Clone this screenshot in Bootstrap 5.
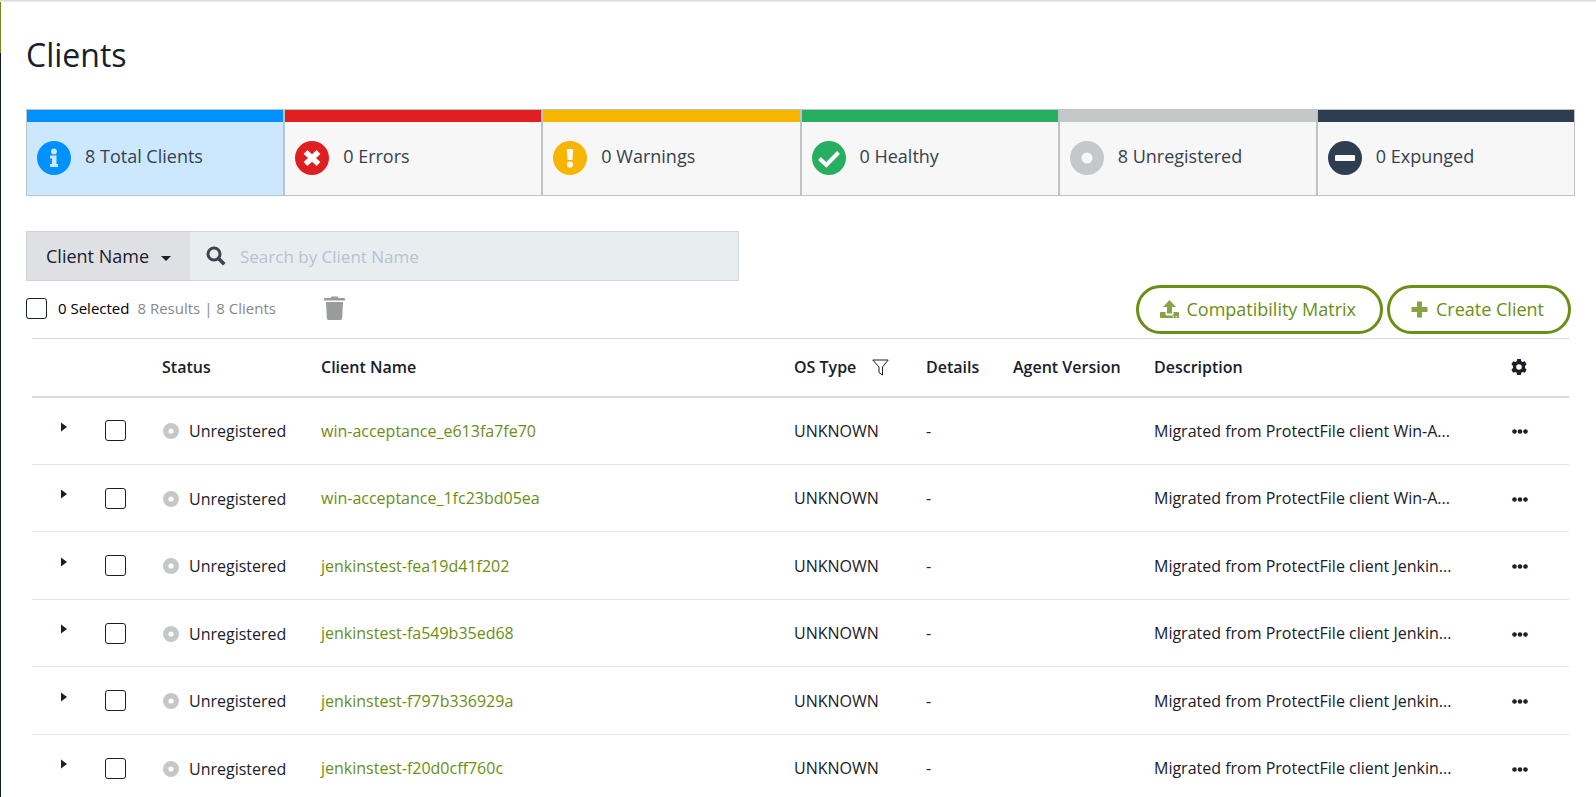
<!DOCTYPE html>
<html lang="en">
<head>
<meta charset="utf-8">
<meta name="viewport" content="width=device-width, initial-scale=1">
<title>Clients</title>
<link href="https://cdn.jsdelivr.net/npm/bootstrap@5.3.0/dist/css/bootstrap.min.css" rel="stylesheet">
<style>
  body { font-family: "Open Sans", "Noto Sans", sans-serif; font-size: 16px; line-height: 24px; color: #18202a; background: #fff; }
  svg { display: block; fill: currentColor; flex: none; }

  /* app frame: thin top bar and the edge of the side menu */
  .topline { height: 1px; background: #dcdcdc; border-bottom: 1px solid #ececec; box-sizing: content-box; }
  .side-edge { width: 1px; background: #101a26; }
  .side-edge span { display: block; height: 51px; background: #76881d; }
  .page { padding: 29px 21px 0 25px; min-width: 0; }
  h1 { font-size: 32px; line-height: 48px; font-weight: 500; margin: 0 0 30px; }

  /* status tiles */
  .tile { flex: 1 1 0; background: #f7f7f7; border: 1px solid #bdc3c7; color: #36414c; font-size: 18px; line-height: 24px; text-align: left; padding: 0; }
  .tile .bar { height: 12px; background: var(--tone); }
  .tile .inner { height: 73px; padding: 0 10px 6px; gap: 14px; }
  .tile svg { color: var(--tone); margin-top: 4px; }
  .tile.current { background: #cce8ff; }
  .t-blue { --tone: #0091ff; } .t-red { --tone: #e02020; } .t-amber { --tone: #f7b500; }
  .t-green { --tone: #27ae60; } .t-grey { --tone: #c4c8c9; } .t-navy { --tone: #2c3e50; }

  /* search */
  .search { width: 713px; max-width: 100%; margin-top: 35px; }
  .search .pick { width: 164px; height: 50px; background: #dfe0e4; border: 1px solid #cdd1d4; border-right: 0; border-radius: 0; font-size: 18px; color: #18202a; padding: 0 19px; }
  .search .pick::after { margin-left: 12px; border-top-width: 5px; border-left-width: 5px; border-right-width: 5px; vertical-align: 2px; }
  .search .glass { background: #e8eef0; border: 1px solid #d3d7d9; border-right: 0; border-radius: 0; padding: 0 14px 0 16px; color: #3b444e; }
  .search .form-control { background: #e8eef0; border: 1px solid #d3d7d9; border-left: 0; border-radius: 0; font-size: 17px; padding: 2px 0 0; margin-left: 0 !important; }
  .search .form-control::placeholder { color: #b4c3d3; }

  /* toolbar */
  .tools { height: 57px; padding-right: 4px; }
  .form-check-input.box { width: 21px; height: 21px; margin: 0; border: 1px solid #18202a; border-radius: 3px; flex: none; float: none; display: block; }
  .picked { height: 57px; padding-bottom: 3px; }
  .counts { font-size: 15px; margin-left: 11px; gap: 8px; }
  .counts label { color: #000; font-weight: 500; }
  .counts span { color: #888; }
  .btn-trash { padding: 0; border: 0; color: #999b9d; margin-left: 48px; }
  .btn-pill { height: 49px; border: 3px solid #6b8e14; border-radius: 25px; color: #6b8e14; font-size: 18px; padding: 0 24px 0 21px; display: flex; align-items: center; gap: 8px; background: #fff; }
  .btn-pill svg { opacity: .8; }

  /* list */
  .list { margin: 0 6px; }
  .list table { table-layout: fixed; margin: 0; --bs-table-color: #18202a; --bs-table-bg: transparent; }
  .list th, .list td { padding: 0; vertical-align: middle; border: 0; white-space: nowrap; }
  .list thead tr { height: 58px; border-top: 1px solid #d8d8d8; border-bottom: 2px solid #d8d8d8; }
  .list th { font-weight: 600; }
  .list tbody tr { height: 67px; border-bottom: 1px solid #e6e6e6; }
  .list tbody tr:nth-child(odd) { height: 68px; }
  .list td a { color: #6b8e14; text-decoration: none; }
  .list .btn { border: 0; padding: 0; color: #18202a; }
  .list .expand { margin: 0 0 8px 29px; display: block; }
  .list .more { margin: 2px 0 0 1px; display: block; }
  .list .stat { gap: 10px; padding-top: 1px; color: #18202a; }
  .list .stat svg { color: #c4c8c9; margin-left: 1px; }
  .c-exp { width: 73px; } .c-box { width: 57px; } .c-stat { width: 159px; } .c-os { width: 132px; }
  .c-det { width: 87px; } .c-agent { width: 141px; } .c-desc { width: 357px; } .c-act { width: 58px; }
</style>
</head>
<body>
<svg width="0" height="0" class="position-absolute" aria-hidden="true">
  <defs>
    <symbol id="ring" viewBox="0 0 34 34"><path fill-rule="evenodd" d="M17 0a17 17 0 1 0 0 34a17 17 0 0 0 0-34zm0 11.500a5.500 5.500 0 1 1 0 11a5.500 5.500 0 0 1 0-11z"/></symbol>
    <symbol id="arrow" viewBox="0 0 6 10"><path d="M0 0.500L6 5L0 9.500z"/></symbol>
    <symbol id="dots" viewBox="0 0 16 5"><circle cx="2.500" cy="2.500" r="2.300"/><circle cx="8" cy="2.500" r="2.300"/><circle cx="13.500" cy="2.500" r="2.300"/></symbol>
  </defs>
</svg>
<div class="d-flex flex-column vh-100 overflow-hidden">
  <div class="topline flex-shrink-0"></div>
  <div class="d-flex flex-grow-1">
    <div class="side-edge flex-shrink-0"><span></span></div>
    <main class="page flex-grow-1">
      <h1>Clients</h1>

      <div class="d-flex">
        <button type="button" class="tile t-blue current"><div class="bar"></div><div class="inner d-flex align-items-center">
          <svg width="34" height="34" viewBox="0 0 34 34"><circle cx="17" cy="17" r="17"/><g fill="#cce8ff"><circle cx="17" cy="10.500" r="2.900"/><path d="M13 14.500h6.500v8.500H21v3h-8v-3h2v-5.500h-2z"/></g></svg>
          <span>8 Total Clients</span></div></button>
        <button type="button" class="tile t-red"><div class="bar"></div><div class="inner d-flex align-items-center">
          <svg width="34" height="34" viewBox="0 0 34 34"><circle cx="17" cy="17" r="17"/><path d="M10.500 11L23.500 23M23.500 11L10.500 23" stroke="#fff" stroke-width="5.500"/></svg>
          <span>0 Errors</span></div></button>
        <button type="button" class="tile t-amber"><div class="bar"></div><div class="inner d-flex align-items-center">
          <svg width="34" height="34" viewBox="0 0 34 34"><circle cx="17" cy="17" r="17"/><g fill="#f7f7f7"><path d="M13.800 8h6.400l-.7 11h-5z"/><circle cx="17" cy="23.500" r="3.100"/></g></svg>
          <span>0 Warnings</span></div></button>
        <button type="button" class="tile t-green"><div class="bar"></div><div class="inner d-flex align-items-center">
          <svg width="34" height="34" viewBox="0 0 34 34"><circle cx="17" cy="17" r="17"/><path d="M7.500 17.500l6.800 6.500L26.500 11.500" fill="none" stroke="#fff" stroke-width="4"/></svg>
          <span>0 Healthy</span></div></button>
        <button type="button" class="tile t-grey"><div class="bar"></div><div class="inner d-flex align-items-center">
          <svg width="34" height="34"><use href="#ring"/></svg>
          <span>8 Unregistered</span></div></button>
        <button type="button" class="tile t-navy"><div class="bar"></div><div class="inner d-flex align-items-center">
          <svg width="34" height="34" viewBox="0 0 34 34"><circle cx="17" cy="17" r="17"/><rect x="7" y="14" width="20" height="6" rx="1" fill="#f7f7f7"/></svg>
          <span>0 Expunged</span></div></button>
      </div>

      <div class="input-group search flex-nowrap">
        <button type="button" class="btn pick dropdown-toggle text-start" data-bs-toggle="dropdown">Client Name</button>
        <label class="input-group-text glass" for="q" aria-label="Search"><svg width="20" height="20" viewBox="0 0 20 20"><path fill="none" stroke="currentColor" stroke-width="3" d="M14 8a6 6 0 1 1-12 0a6 6 0 0 1 12 0z"/><path stroke="currentColor" stroke-width="3.600" d="M12.500 12.500L18.300 18.300"/></svg></label>
        <input type="text" class="form-control" id="q" placeholder="Search by Client Name">
      </div>

      <div class="tools d-flex align-items-center">
        <div class="picked d-flex align-items-center">
          <input type="checkbox" class="form-check-input box" id="all">
          <div class="counts d-flex"><label for="all">0 Selected</label><span>8 Results | 8 Clients</span></div>
          <button type="button" class="btn btn-trash" aria-label="Delete"><svg width="21" height="24" viewBox="0 0 21 24"><path d="M1 2h5.500l1-1.500h6l1 1.500H20a1 1 0 0 1 1 1v1.500H0V3a1 1 0 0 1 1-1zM2 6h17l-.8 16a2 2 0 0 1-2 2H4.800a2 2 0 0 1-2-2z"/></svg></button>
        </div>
        <div class="d-flex ms-auto gap-1">
          <button type="button" class="btn btn-pill"><svg width="19" height="19" viewBox="0 0 19 19"><path d="M9.500 0L16 7h-4v6.500H7V7H3z"/><path fill-rule="evenodd" d="M1 12h4.500v2a1.500 1.500 0 0 0 1.500 1.500h5a1.500 1.500 0 0 0 1.500-1.500v-2H18a1 1 0 0 1 1 1v4a1 1 0 0 1-1 1H1a1 1 0 0 1-1-1v-4a1 1 0 0 1 1-1zM12.500 16.200v1h1.500v-1zM15.500 16.200v1H17v-1z"/></svg>Compatibility Matrix</button>
          <button type="button" class="btn btn-pill"><svg width="17" height="17" viewBox="0 0 17 17"><path d="M6 0.500h5V6h5.500v5H11v5.500H6V11H0.500V6H6z"/></svg>Create Client</button>
        </div>
      </div>

      <div class="list">
        <table class="table">
          <colgroup><col class="c-exp"><col class="c-box"><col class="c-stat"><col><col class="c-os"><col class="c-det"><col class="c-agent"><col class="c-desc"><col class="c-act"></colgroup>
          <thead>
            <tr><th></th><th></th><th>Status</th><th>Client Name</th>
              <th><div class="d-flex align-items-center gap-3">OS Type <svg width="17" height="17" viewBox="0 0 17 17"><path fill="none" stroke="currentColor" d="M.8 1h15.400L10.500 8v8L7 13.500V8z"/></svg></div></th>
              <th>Details</th><th>Agent Version</th><th>Description</th>
              <th><button type="button" class="btn d-block" aria-label="Columns"><svg width="16" height="16" viewBox="0 0 16 16"><path fill-rule="evenodd" d="M6.200 0h3.600l.5 2.200 1.300.7 2.200-.7 1.800 3.100L14 6.900v2.200l1.600 1.600-1.800 3.100-2.200-.7-1.300.7-.5 2.200H6.200l-.5-2.200-1.300-.7-2.200.7L.4 10.700 2 9.100V6.900L.4 5.300l1.800-3.100 2.200.7 1.300-.7zM8 5.200a2.800 2.800 0 1 0 0 5.600a2.800 2.800 0 0 0 0-5.600z"/></svg></button></th></tr>
          </thead>
          <tbody id="rows"></tbody>
        </table>
      </div>
    </main>
  </div>
</div>
<script>
  const clients = [
    ["win-acceptance_e613fa7fe70", "Migrated from ProtectFile client Win-A..."],
    ["win-acceptance_1fc23bd05ea", "Migrated from ProtectFile client Win-A..."],
    ["jenkinstest-fea19d41f202", "Migrated from ProtectFile client Jenkin..."],
    ["jenkinstest-fa549b35ed68", "Migrated from ProtectFile client Jenkin..."],
    ["jenkinstest-f797b336929a", "Migrated from ProtectFile client Jenkin..."],
    ["jenkinstest-f20d0cff760c", "Migrated from ProtectFile client Jenkin..."]
  ];
  document.getElementById("rows").innerHTML = clients.map(([name, text]) => `
    <tr>
      <td><button type="button" class="btn expand" aria-label="Expand"><svg width="6" height="10"><use href="#arrow"/></svg></button></td>
      <td><input type="checkbox" class="form-check-input box" aria-label="${name}"></td>
      <td><div class="stat d-flex align-items-center"><svg width="16" height="16"><use href="#ring"/></svg>Unregistered</div></td>
      <td><a href="#">${name}</a></td>
      <td>UNKNOWN</td><td>-</td><td></td><td>${text}</td>
      <td><button type="button" class="btn more" aria-label="Actions"><svg width="16" height="5"><use href="#dots"/></svg></button></td>
    </tr>`).join("");
</script>
<script src="https://cdn.jsdelivr.net/npm/bootstrap@5.3.0/dist/js/bootstrap.bundle.min.js"></script>
</body>
</html>
